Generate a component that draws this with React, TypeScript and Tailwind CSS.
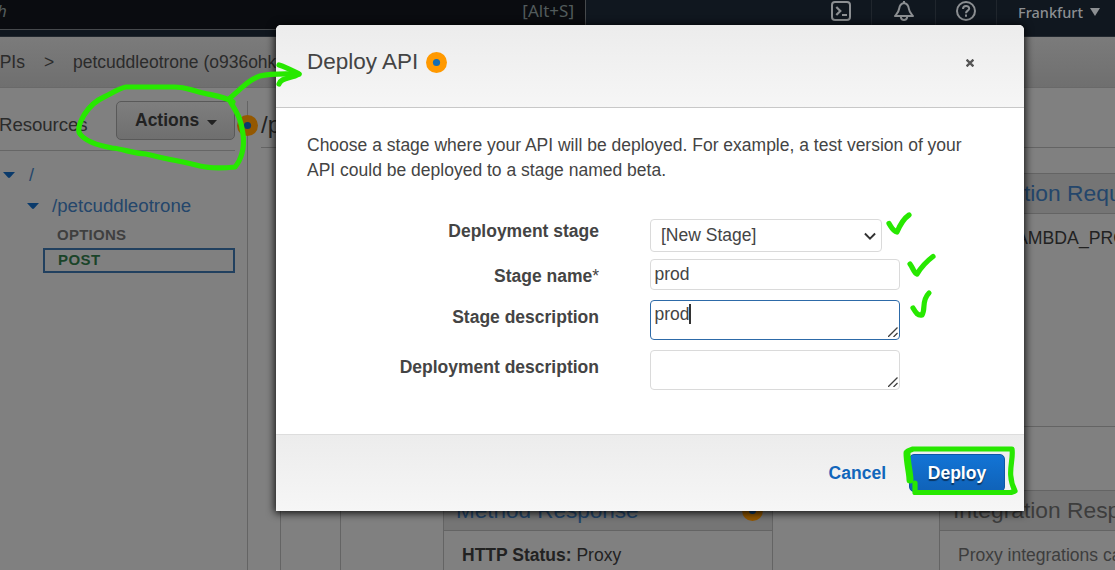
import React from "react";

const ARIAL = "font-['Liberation_Sans',Arial,sans-serif]";

function InfoDot({ className = "", outer, inner }: { className?: string; outer: string; inner: string }) {
  return (
    <svg className={`size-[21px] shrink-0 ${className}`} viewBox="0 0 21 21">
      <circle cx="10.5" cy="10.5" r="10.5" fill={outer} />
      <circle cx="10.5" cy="10.5" r="3.6" fill={inner} />
    </svg>
  );
}

function Caret({ className = "" }: { className?: string }) {
  return (
    <svg className={`shrink-0 ${className}`} viewBox="0 0 12 6" preserveAspectRatio="none">
      <path d="M0 0h12L7 5.5Q6 6.4 5 5.5Z" fill="currentColor" />
    </svg>
  );
}

function TopBar() {
  return (
    <header className="flex h-[37px] items-start border-b border-[#22282f] bg-[#10171f]">
      <div className="flex h-[30px] w-[586px] justify-between border-r border-b border-[#46494c] bg-[#0a0c10] pr-[11px] font-['Noto_Sans','Open_Sans',sans-serif] text-[17px] leading-[22px] text-[#525b5c]">
        <span className="-ml-[3px] italic">h</span>
        <span className="text-[17px]">[Alt+S]</span>
      </div>
      <div className="ml-auto flex h-[36px] text-[#8c8f92]">
        <div className="flex w-[63px] border-r border-[#20262d] pl-[22px]">
          <svg className="mt-px size-5" viewBox="0 0 20 20" fill="none" stroke="currentColor" strokeWidth="2">
            <rect x="1" y="1" width="18" height="18" rx="3" />
            <path d="M5.300 6 9.300 10 5.300 14" strokeWidth="2.200" />
            <path d="M11 14h5" />
          </svg>
        </div>
        <div className="flex w-[64px] border-r border-[#20262d] pl-[22px]">
          <svg className="mt-px size-5" viewBox="0 0 20 20" fill="none" stroke="currentColor" strokeWidth="2" strokeLinejoin="round">
            <path d="M10 2C7 2.500 5.600 4.500 5.200 7.500 4.800 11 3 12.500 1 15h18c-2-2.500-3.800-4-4.200-7.500C14.400 4.500 13 2.500 10 2Z" />
            <path d="M10 0v2M6.800 15c0 5.400 6.400 5.400 6.400 0" />
          </svg>
        </div>
        <div className="flex w-[61px] border-r border-[#20262d] pl-[20px]">
          <svg className="mt-px size-5" viewBox="0 0 20 20" fill="none" stroke="currentColor" strokeWidth="2">
            <circle cx="10" cy="10" r="9" />
            <path d="M7 8c0-4 6.200-3.800 6.200-.4C13.200 9.800 10 9.600 10 12.300M10 13.600v2.200" />
          </svg>
        </div>
        <div className="flex w-[118px] items-center gap-[7px] pb-[13px] pl-[21px] font-['Noto_Sans','Open_Sans',sans-serif] text-[14.500px] leading-5 font-medium">
          <span className="w-[65px] whitespace-nowrap">Frankfurt</span>
          <svg className="h-2 w-[10px]" viewBox="0 0 10 8">
            <path d="M0 0h10L5 8Z" fill="currentColor" />
          </svg>
        </div>
      </div>
    </header>
  );
}

function Sidebar() {
  return (
    <aside className="flex w-[247px] shrink-0 flex-col">
      <div className="mr-3 flex h-[63px] items-start justify-between border-b border-[#666]">
        <h2 className="-ml-px pt-[25px] text-[18.700px] leading-6 tracking-[-0.1px] text-[#2b2b2b]">Resources</h2>
        <button className="mt-[13px] flex h-[39px] w-[119px] items-center rounded-[5px] border border-[#595959] bg-linear-to-b from-[#7e7e7e] to-[#6f6f6f] pl-[18px] text-[17.500px] font-bold text-[#222]">
          <span className="-mt-px">Actions</span>
          <Caret className="mt-[3px] ml-2 h-[5px] w-[10px]" />
        </button>
      </div>
      <div className="mt-[12px] flex h-6 items-center pl-[3px] text-[18px] text-[#24466b]">
        <Caret className="h-[6px] w-[12px] text-[#0a3a6b]" />
        <span className="ml-[14px]">/</span>
      </div>
      <div className="mt-[7px] flex h-6 items-center pl-[27px] text-[18.700px] text-[#24466b]">
        <Caret className="h-[6px] w-[12px] text-[#0a3a6b]" />
        <span className="ml-[13px]">/petcuddleotrone</span>
      </div>
      <div className="mt-[6px] h-6 pl-[57px] text-[15px] leading-[22px] font-bold tracking-[0.25px] text-[#3f3f3f]">OPTIONS</div>
      <div className="ml-[43px] h-[25px] w-[192px] border-2 border-[#21405f] pl-[13px] text-[15px] leading-[19px] font-bold tracking-[0.4px] text-[#1a4429]">POST</div>
    </aside>
  );
}

function RequestFlow() {
  return (
    <main className="flex flex-1 flex-col">
      <div className="ml-[13px] flex h-[60px] items-start border-b border-[#646464] pt-[22px] text-[24px] leading-[30px] text-[#222]">
        /petcuddleotrone
      </div>
      <div className="flex flex-1">
        <div className="mt-[25px] ml-[32px] w-[61px] border-x border-[#646464]" />
        <div className="ml-[102px] flex w-[330px] flex-col justify-end">
          <section className="h-20 border border-b-0 border-[#646464]">
            <div className="flex h-10 items-center justify-between border-b border-[#646464] bg-[#757575] pr-[9px] pl-[12px] text-[22.500px] text-[#24466b]">
              <span>Method Response</span>
              <InfoDot outer="#945800" inner="#0a3a6b" />
            </div>
            <p className="pt-[12px] pl-[18px] text-[17.500px] leading-6 text-[#222]">
              <b>HTTP Status:</b> Proxy
            </p>
          </section>
        </div>
        <div className="ml-[166px] flex w-[240px] flex-col justify-between">
          <section className="mt-[25px] h-[254px] border border-[#646464] whitespace-nowrap">
            <div className="h-10 border-b border-[#646464] bg-[#757575] pl-[13px] text-[22.800px] leading-[39px] text-[#24466b]">
              Integration Request
            </div>
            <p className="pt-[12px] pl-[18px] text-[17.700px] leading-6 text-[#222]">Type: LAMBDA_PROXY</p>
          </section>
          <section className="h-20 border border-b-0 border-[#646464] whitespace-nowrap">
            <div className="h-10 border-b border-[#646464] bg-[#757575] pl-[13px] text-[22.800px] leading-[39px] text-[#3d3d3d]">
              Integration Response
            </div>
            <p className="pt-[12px] pl-[18px] text-[17.500px] leading-6 text-[#3d3d3d]">Proxy integrations cannot</p>
          </section>
        </div>
      </div>
    </main>
  );
}

function ResizeGrip() {
  return (
    <svg className="absolute right-px bottom-[2px] size-[10px]" viewBox="0 0 10 10" stroke="#3f3f3f" strokeWidth="1.3">
      <path d="M0 10 9.500.5M5.500 10l4-4" />
    </svg>
  );
}

function DeployDialog() {
  const label = "pr-[51px] text-right text-[17.500px] font-bold leading-6 whitespace-nowrap";
  return (
    <div
      role="dialog"
      className="absolute top-[25px] left-[276px] flex h-[486px] w-[748px] flex-col overflow-hidden rounded-t-[5px] bg-white text-[#444] shadow-[0_1px_8px_1px_rgba(0,0,0,0.9)]"
    >
      <div className="flex h-[83px] items-start border-b border-[#c8c8c8] bg-linear-to-b from-[#ececec] to-[#f6f6f6] pl-[31px]">
        <h1 className="pt-[22px] text-[22.500px] leading-[30px] whitespace-nowrap">Deploy API</h1>
        <InfoDot className="mt-[27px] ml-2" outer="#ff9900" inner="#146eb4" />
        <svg className="mt-[34px] mr-[50px] ml-auto size-2" viewBox="0 0 8 8" stroke="#555" strokeWidth="2.300">
          <path d="M.6.6l6.800 6.800M7.400.6.6 7.400" />
        </svg>
      </div>
      <div className="flex flex-1 flex-col pt-[25px]">
        <p className="pl-[31px] text-[17.500px] leading-[25px] whitespace-nowrap">
          Choose a stage where your API will be deployed. For example, a test version of your
          <br />
          API could be deployed to a stage named beta.
        </p>
        <div className="mt-[36px] grid grid-cols-[374px_250px] grid-rows-[40px_41px_50px_40px] items-start text-[17.500px]">
          <span className={label}>Deployment stage</span>
          <div className="flex h-[33px] w-[232px] items-center justify-between rounded border border-[#dadada] pr-[5px] pl-[10px]">
            <span>[New Stage]</span>
            <svg className="size-3" viewBox="0 0 12 12" fill="none" stroke="#333" strokeWidth="1.900">
              <path d="M.9 3.500 6 8.600l5.100-5.100" />
            </svg>
          </div>
          <span className={`${label} mt-[5px]`}>
            Stage name<span className="font-normal">*</span>
          </span>
          <div className="h-[31px] rounded border border-[#dadada] pl-[3.500px] leading-[28px]">prod</div>
          <span className={`${label} mt-[5px]`}>Stage description</span>
          <div className="relative flex h-10 rounded border border-[#2d6aa8] pl-[3.500px] leading-[26px]">
            prod
            <span className="-ml-px mt-[3px] h-5 w-[2px] bg-[#333]" />
            <ResizeGrip />
          </div>
          <span className={`${label} mt-[5px]`}>Deployment description</span>
          <div className="relative h-10 rounded border border-[#dadada]">
            <ResizeGrip />
          </div>
        </div>
      </div>
      <div className="flex h-[77px] items-start justify-end border-t border-[#ddd] bg-linear-to-b from-[#ececec] to-[#f6f6f6] pt-[19px] pr-[19px] text-[17.500px] leading-[38px] font-bold">
        <span className="mr-[23px] text-[#1166bb]">Cancel</span>
        <button className="h-[38px] w-24 rounded-[5px] border border-[#0d57a5] bg-linear-to-b from-[#1274d6] to-[#1062b8] leading-[36px] text-white [text-shadow:0_2px_1px_rgba(0,0,0,0.5)]">
          Deploy
        </button>
      </div>
    </div>
  );
}

function InkMarks() {
  return (
    <svg
      className="pointer-events-none absolute inset-0 h-[570px] w-[1115px]"
      viewBox="0 0 1115 570"
      fill="none"
      stroke="#27e800"
      strokeWidth="5.2"
      strokeLinecap="round"
      strokeLinejoin="round"
    >
      <path d="M233 102C224 96 210 95 199 92C190 90 186 87 175 87H126C119 88 111 94 104 97C95 101 89 107 84 115C80 122 77 130 80 134C86 142 101 146 112 148C124 149 130 153 146 154C170 160 186 162 200 166C212 169 225 168 235 167C241 160 245 148 243 134C241 118 237 113 230 101" />
      <path d="M230 98C241 89 248 80 260 76C272 73 286 74 299 74" />
      <path d="M279 65C286 67 293 71 299 74C291 79 281 77 279 84" />
      <path d="M889 223.500C892 228 893 231 897 232C900 225 903 219 909 215" />
      <path d="M910 264C913 268 914 273 917 274C922 266 927 261 933 256.500" />
      <path d="M913 308C916 313 918 316 922 315C926 309 921 301 929 293" />
      <path d="M907 453C907 463 910 473 910 480" strokeWidth="7" />
      <path d="M908 451L913 449H1012C1014 460 1006 473 1015 491L1011 492.500H915V483" />
    </svg>
  );
}

export default function App() {
  return (
    <div className={`relative flex h-[570px] w-[1115px] flex-col overflow-hidden bg-[#808080] ${ARIAL}`}>
      <TopBar />
      <nav className="flex h-[51px] items-start border-b border-[#696969] bg-linear-to-b from-[#7b7b7b] to-[#6f6f6f] pt-[13px] text-[17.500px] leading-6 whitespace-nowrap text-[#2b2b2b]">
        <span className="-ml-[12px] w-[38px]">APIs</span>
        <span className="ml-[18px] w-[29px]">&gt;</span>
        <span>petcuddleotrone (o936ohkr8b)</span>
      </nav>
      <div className="flex flex-1">
        <Sidebar />
        <div className="mt-[13px] w-px shrink-0 bg-[#646464]" />
        <RequestFlow />
      </div>
      <InfoDot className="absolute top-[115px] left-[237px]" outer="#945800" inner="#0a3a6b" />
      <DeployDialog />
      <InkMarks />
    </div>
  );
}
